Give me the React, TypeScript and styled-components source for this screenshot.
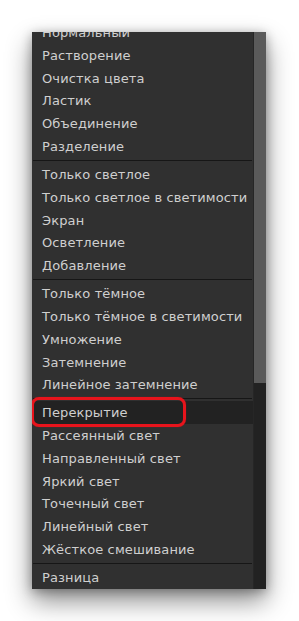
import React from "react";
import styled, { createGlobalStyle } from "styled-components";

const GlobalStyle = createGlobalStyle`
  html, body {
    margin: 0;
    padding: 0;
    background: #ffffff;
  }
  body {
    font-family: "DejaVu Sans", "Noto Sans", sans-serif;
  }
`;

type Group = string[];

const groups: Group[] = [
  ["Нормальный", "Растворение", "Очистка цвета", "Ластик", "Объединение", "Разделение"],
  ["Только светлое", "Только светлое в светимости", "Экран", "Осветление", "Добавление"],
  ["Только тёмное", "Только тёмное в светимости", "Умножение", "Затемнение", "Линейное затемнение"],
  [
    "Перекрытие",
    "Рассеянный свет",
    "Направленный свет",
    "Яркий свет",
    "Точечный свет",
    "Линейный свет",
    "Жёсткое смешивание",
  ],
  ["Разница"],
];

const ACTIVE = "Перекрытие";

export default function App() {
  return (
    <>
      <GlobalStyle />
      <Page>
        <Menu>
          <List>
            {groups.map((group, gi) => (
              <React.Fragment key={gi}>
                {gi > 0 && <Separator />}
                {group.map((name) => (
                  <Item key={name} $active={name === ACTIVE}>
                    <span>{name}</span>
                    {name === ACTIVE && <Marker />}
                  </Item>
                ))}
              </React.Fragment>
            ))}
          </List>
          <Scrollbar>
            <Thumb />
          </Scrollbar>
        </Menu>
      </Page>
    </>
  );
}

const Page = styled.div`
  width: 299px;
  height: 621px;
  padding: 32px 0 0 32px;
  box-sizing: border-box;
`;

const Menu = styled.div`
  display: flex;
  width: 234px;
  height: 557px;
  background: #303030;
  overflow: hidden;
  box-shadow: 0 12px 24px rgba(0, 0, 0, 0.45), 0 2px 10px rgba(0, 0, 0, 0.3);
`;

const List = styled.div`
  flex: 1;
  display: flex;
  flex-direction: column;
  margin-top: -11px;
  padding-left: 1px;
`;

const Item = styled.div<{ $active?: boolean }>`
  position: relative;
  height: 23px;
  display: flex;
  align-items: center;
  padding-left: 9px;
  font-size: 13px;
  letter-spacing: 0.12px;
  color: #cfcfcf;
  white-space: nowrap;
  background: ${(p) => (p.$active ? "#222222" : "transparent")};
`;

const Marker = styled.div`
  position: absolute;
  left: -2px;
  top: -4px;
  width: 155px;
  height: 30px;
  box-sizing: border-box;
  border: 3.5px solid #e8141c;
  border-radius: 8px;
  box-shadow: 0 0 1px rgba(232, 20, 28, 0.6);
`;

const Separator = styled.div`
  height: 1px;
  margin: 2px 1px 2px 0;
  background: #161616;
`;

const Scrollbar = styled.div`
  width: 12px;
  border-left: 1px solid #262626;
  background: #222222;
  display: flex;
  flex-direction: column;
`;

const Thumb = styled.div`
  height: 351px;
  background: #5a5a5a;
`;
